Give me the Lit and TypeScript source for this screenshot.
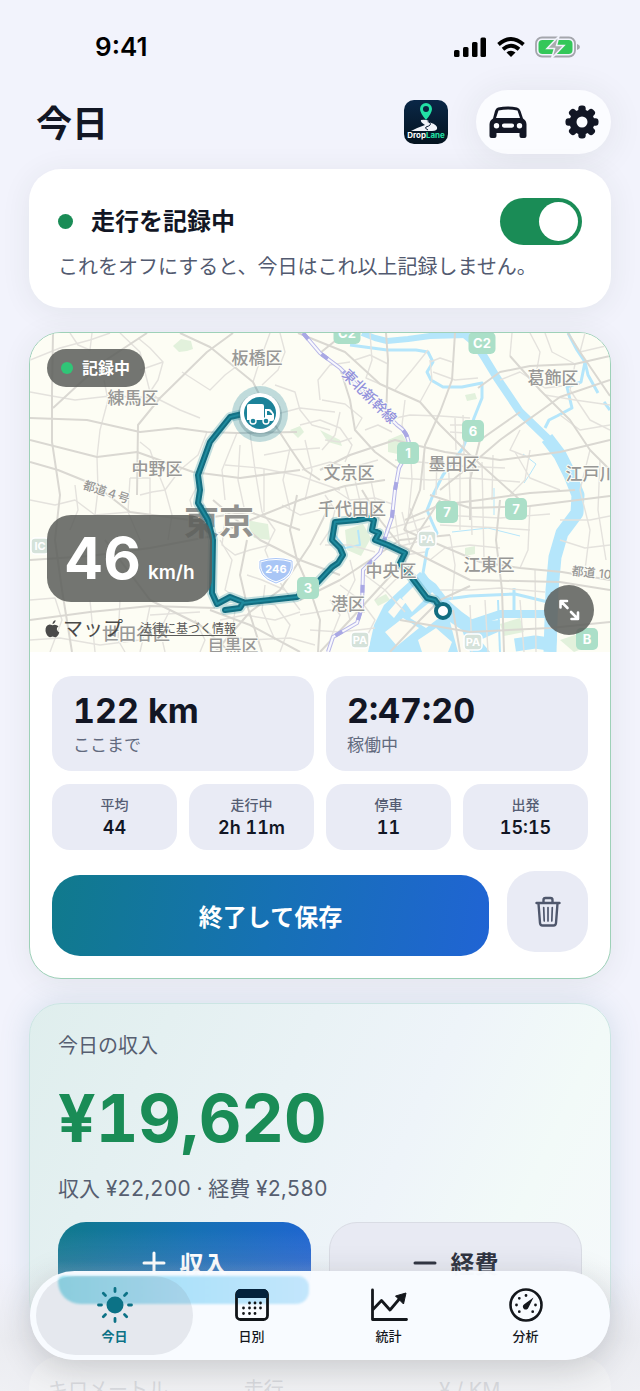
import { LitElement, html, css, svg } from "lit";
import { customElement, property, state } from "lit/decorators.js";

const FONT = css`"Inter", "Noto Sans CJK JP", sans-serif`;

/* ---------- map data ---------- */

const MAJOR_ROADS = [
  "M53 333L52 392L52 442L60 495L55 540L62 590L72 652",
  "M30 440L97 457L137 452L193 472L240 478L300 470",
  "M30 418L87 420L140 432L177 428L207 432L237 433L297 432",
  "M53 408L103 362L147 333",
  "M30 462L58 470L95 485L130 512L190 520L250 512L300 530",
  "M137 495L138 425L160 398L207 352L233 333",
  "M180 333L210 347L253 382L262 400L275 425L290 448L305 470L320 480",
  "M30 560L90 556L150 548L213 536L260 516L300 500L345 486L385 480",
  "M298 333L345 352L380 384L420 402L440 425L470 455L520 500",
  "M320 353L345 333",
  "M386 333L388 360L386 420",
  "M455 333L452 380L440 412L425 445L420 490L404 530",
  "M320 470L350 455L395 440L415 445L445 452L500 460L560 452L610 440",
  "M340 368L350 400L355 430L375 452L400 470",
  "M510 356L540 390L570 420L590 450L610 470",
  "M478 388L500 372L530 366L575 364L610 356",
  "M610 380L560 397L500 440L465 470L440 490",
  "M430 495L470 508L530 506L610 496",
  "M405 520L440 505L480 500L530 493L575 490",
  "M404 530L440 545L480 562L520 568L562 572L610 580",
  "M362 490L380 520L400 545L430 560L470 580L560 582L610 590",
  "M320 652L350 620L382 585L405 560L420 530L440 500",
  "M300 600L340 580L370 560L400 540L450 535",
  "M390 652L420 620L440 600L470 586",
  "M400 620L470 632L550 628L610 622",
  "M500 500L496 540L502 590L504 652",
  "M210 610L250 625L300 652",
  "M247 540L240 575L247 605L262 652",
  "M297 495L290 530L297 560L310 590L320 620L318 652",
  "M213 500L260 540L300 560L340 575",
  "M105 540L150 600L200 625L230 652",
  "M215 652L250 612L280 590L310 545L330 505",
  "M568 333L580 352L610 396",
  "M520 412L480 440L470 480L470 520",
  "M453 610L460 652",
  "M30 620L90 612L150 606L215 608",
];

const MINOR_ROADS = [
  "M30 360L60 348L90 340L110 333", "M70 333L78 345L90 350L92 333", "M30 392L52 396L75 400L110 396L160 398",
  "M97 457L100 430L108 400L104 380", "M97 457L98 490L95 515", "M140 370L163 362L158 380L150 392L160 400L180 410L200 418",
  "M163 362L150 348L138 338", "M182 372L210 390L225 375L245 360", "M120 333L140 352L150 392",
  "M140 442L150 450L157 470L165 490L152 492L140 495", "M207 432L198 455L180 470L165 490",
  "M237 433L230 450L222 470L225 500", "M225 465L260 468L300 476L340 490", "M240 445L238 480L245 512",
  "M250 433L255 470L262 512", "M264 455L290 450L320 448", "M273 415L300 408L335 412", "M275 385L295 392L300 410L312 425L330 430",
  "M253 382L260 360L270 333", "M280 333L285 352L278 370L262 385", "M290 448L283 480L290 510", "M305 440L312 470L305 500",
  "M264 468L264 512", "M300 425L320 420L340 428L352 445L345 462", "M322 400L345 404L362 418L355 430",
  "M355 360L370 355L388 364", "M370 333L372 360L366 378L380 384", "M395 390L412 370L428 350", "M405 400L402 425L408 440",
  "M386 420L410 415L440 416L470 418", "M420 402L432 380L430 360", "M433 372L455 380L478 378", "M430 362L440 358L452 362",
  "M450 425L478 425", "M450 432L482 434", "M455 418L456 450", "M463 415L464 455", "M395 460L430 463L460 466L505 468",
  "M400 478L430 480L470 478L520 482", "M410 440L412 480L408 520", "M424 455L424 490", "M437 455L436 495", "M448 455L450 500",
  "M460 470L460 530", "M470 465L472 535", "M482 462L484 560", "M493 455L492 500", "M440 515L500 518L550 514",
  "M440 525L500 528L530 530", "M530 505L528 550L520 568", "M515 452L530 478L560 490", "M530 450L525 480L510 495",
  "M535 380L540 352L530 333", "M510 356L512 333", "M545 333L552 352L575 364", "M585 333L580 352L610 345",
  "M500 380L520 372L545 388L580 384", "M545 395L575 400L610 405", "M560 415L580 430L610 425", "M575 364L570 390L590 420L610 430",
  "M520 430L510 450L530 458", "M590 450L580 490L590 530L585 570", "M600 460L598 510L606 560", "M560 520L590 520L610 516",
  "M560 540L585 548L610 545", "M450 535L455 565L452 600", "M430 560L445 548L470 545L500 548",
  "M440 590L470 590L500 588L545 592", "M470 605L472 652", "M485 600L488 652", "M520 600L524 652", "M535 570L536 652",
  "M325 495L335 510L330 530L320 545", "M335 490L350 500L375 498L395 505", "M345 486L352 510", "M355 480L362 510L370 520",
  "M370 476L376 505", "M325 545L350 545L375 552", "M350 560L355 580L345 600L350 620", "M365 575L385 590L405 612",
  "M340 585L360 600L375 620L365 640", "M330 600L340 615L330 640", "M300 615L330 610L365 612", "M310 630L340 632L375 628",
  "M375 600L395 580L415 565", "M380 545L400 555L412 570", "M395 515L400 550", "M402 512L410 545", "M410 508L420 540",
  "M385 530L425 518", "M388 538L430 526", "M393 548L432 538", "M398 556L425 552", "M220 540L232 560L225 590L240 600",
  "M226 512L222 545L235 555L250 550L270 545", "M262 512L275 530L265 550L275 575L285 590", "M282 505L300 515L320 510",
  "M247 575L262 580L285 590L300 610", "M255 600L275 605L290 625L280 652", "M265 585L262 610L275 640", "M220 620L245 615L275 620L300 612",
  "M225 635L250 640L290 638L315 645", "M235 610L232 635L240 652", "M195 620L205 640L200 652", "M170 610L160 630L165 652",
  "M150 606L145 630L140 652", "M150 615L200 612", "M120 600L118 640L125 652", "M90 600L95 652", "M30 600L55 598L62 620L50 652",
  "M30 640L60 638L100 645L140 640", "M30 500L55 505L75 500L95 515L130 512", "M75 485L78 510L70 530", "M130 478L128 512L140 540",
  "M130 478L150 478L150 520", "M165 490L172 515L168 540", "M195 520L190 500L200 480", "M320 400L318 380L330 365L350 362",
  "M340 412L335 435L322 450", "M302 470L330 462L350 468L378 460", "M325 440L340 442L352 438", "M365 430L378 425L392 432",
];

const RIVERS: Array<[string, number]> = [
  ["M362 333L375 338L387 341L408 339L430 336L467 335", 6],
  ["M462 332L474 342L483 355L497 378L520 412L547 438L560 452", 8],
  ["M547 438L560 455L570 475L578 495L577 513L562 533L555 557L552 590L550 652", 13],
  ["M350 345L387 350L416 350L428 352L433 362L427 372L431 380L443 387L462 387L482 383L482 398L474 418L470 430L463 448L443 475L433 495", 3],
  ["M433 495L427 510L432 522L437 533L427 550L423 573L433 587", 3],
  ["M568 333L577 350L585 362L581 382L567 387L572 408L557 416L549 420L545 428", 3],
  ["M585 362L588 375L598 393", 3],
  ["M604 402L610 410", 3],
  ["M523 454L536 464L530 474L524 483", 1],
  ["M494 488L494 515", 1],
  ["M452 532L488 528L520 536", 1],
  ["M440 600L470 596L515 594L548 602", 3],
  ["M470 624L500 614L545 614", 8],
  ["M514 588L514 610", 3],
  ["M515 645L535 642L556 645", 13],
  ["M498 600L500 652", 2],
  ["M335 535L345 548L360 545L358 530", 2],
];

const GREENS = [
  "M173 346l8-7 10 2 2 8-6 2-8 1z", "M388 440l14-6 6 10-10 10-10-2z", "M246 520l22 4 2 16-16-2z",
  "M345 530l18-6 8 14-10 18-14-6z", "M320 430l20 10 2 6-14-4z", "M465 395l10-2 2 6-10 2z", "M290 430l10-4 4 6-6 6z",
  "M500 624l20-6 4 14-20 4z", "M560 640l30-10 4 14-20 8z", "M374 600l12-6 4 6-12 6z", "M465 548l10-2v8l-10 2z",
];

const ROUTE =
  "M258 413L247 413L230 417L210 442L198 475L200 490L198 503L208 520L213 540L212 593L217 604L230 597L243 602L240 608L225 610L240 608L243 603L297 597L318 582L332 567L338 563L343 555L340 548L332 540L335 522L357 520L368 518L374 520L372 530L379 533L375 540L388 545L405 553L400 563L412 578L427 598L435 600L442 610";

const RAIL =
  "M303 333L320 353L340 368L397 425Q410 433 409 450L399 468L395 490L392 517L380 553L363 570L362 607L357 623L333 637L328 652";

const PLACES: Array<[string, number, number]> = [
  ["板橋区", 257, 364], ["葛飾区", 553, 384], ["練馬区", 133, 404], ["中野区", 157, 475], ["文京区", 349, 479],
  ["墨田区", 454, 470], ["江戸川", 591, 480], ["千代田区", 352, 515], ["中央区", 391, 577], ["江東区", 489, 571],
  ["港区", 348, 610], ["世田谷区", 136, 640], ["目黒区", 233, 652],
];

const SHIELDS: Array<[string, number, number]> = [
  ["C2", 347, 333], ["C2", 482, 343], ["6", 473, 431], ["1", 408, 453], ["7", 447, 512], ["7", 516, 509], ["3", 308, 588], ["B", 587, 639],
];

const PARKING: Array<[string, number, number]> = [["PA", 427, 539], ["PA", 360, 640], ["PA", 473, 642], ["IC", 40, 546]];

@customElement("city-map")
export class CityMap extends LitElement {
  static styles = css`
    :host { display: block; height: 319px; background: #fdfdf4; }
    svg { display: block; width: 100%; height: 100%; font-family: ${FONT}; }
    .major { fill: none; stroke: #dad8d2; stroke-width: 2; stroke-linejoin: round; }
    .minor { fill: none; stroke: #e4e2dd; stroke-width: 1.4; stroke-linejoin: round; }
    .water { fill: #b5e6fb; }
    .river { fill: none; stroke: #b5e6fb; stroke-linejoin: round; }
    .land { fill: #fdfbf1; }
    .green { fill: #e2f1dc; }
    .rail { fill: none; stroke: #b9b8e8; stroke-width: 4; }
    .rail-gap { fill: none; stroke: #f8f8fd; stroke-width: 2; }
    .rail-dash { fill: none; stroke: #a9a8e4; stroke-width: 4; stroke-dasharray: 8 20; }
    .place { font-size: 17px; font-weight: 500; fill: #989896; stroke: #fdfdf6; stroke-width: 2; paint-order: stroke; text-anchor: middle; }
    .city { font-size: 35px; font-weight: 700; fill: #92928f; }
    .road-name { font-size: 12px; }
    .rail-name { font-size: 14px; fill: #9493dc; }
    .shield { fill: #abdfc8; }
    .parking { fill: #d5e2da; stroke: #ffffff; stroke-width: 1.5; }
    .sign { font-size: 13px; font-weight: 700; fill: #fff; text-anchor: middle; }
    .sign-sm { font-size: 11px; }
    .halo { fill: none; stroke: #2a90a5; stroke-opacity: .28; stroke-width: 10; stroke-linejoin: round; stroke-linecap: round; }
    .route { fill: none; stroke: #126d80; stroke-width: 6; stroke-linejoin: round; stroke-linecap: round; }
    .core { fill: none; stroke: #1f8a9d; stroke-width: 2; stroke-linejoin: round; }
  `;

  render() {
    return html`
      <svg viewBox="30 333 580 319" preserveAspectRatio="xMidYMid slice" role="img" aria-label="地図">
        ${GREENS.map((d) => svg`<path class="green" d=${d} />`)}
        <path class="water" d="M368 652L374 625L384 605L400 590L420 572L436 584L448 600L462 612L476 622L500 620L498 632L480 640L490 652Z" />
        <path class="land" d="M388 612l12-14 6 4-12 16zM402 598l16-16 12 12-18 18zM385 632l18-14 16 10-22 18zM410 618l20-16 14 12-18 14zM418 640l18-12 16 14-4 10h-26zM432 592l8 8-6 4-6-6zM450 622l12 8 8 22h-12z" />
        ${RIVERS.map(([d, w]) => svg`<path class="river" stroke-width=${w} d=${d} />`)}
        ${MINOR_ROADS.map((d) => svg`<path class="minor" d=${d} />`)}
        ${MAJOR_ROADS.map((d) => svg`<path class="major" d=${d} />`)}
        ${["rail", "rail-gap", "rail-dash"].map((c) => svg`<path class=${c} d=${RAIL} />`)}
        <text class="place road-name" transform="translate(105 496) rotate(18)">都道４号</text>
        <text class="place road-name" transform="translate(591 577) rotate(6)">都道 10</text>
        <text class="place rail-name" transform="translate(366 400) rotate(45)">東北新幹線</text>
        <path d="M260 561q16-5 32 0q3 16-16 22q-19-6-16-22z" fill="#a9c6f6" stroke="#fff" stroke-width="3" />
        <path d="M260 561q16-5 32 0q3 16-16 22q-19-6-16-22z" fill="none" stroke="#a9c6f6" />
        <text class="sign sign-sm" x="276" y="573">246</text>
        ${PARKING.map(
          ([t, x, y]) => svg`<rect class="parking" x=${x - 9} y=${y - 8} width="18" height="16" rx="4" />
            <text class="sign sign-sm" x=${x} y=${y + 4}>${t}</text>`
        )}
        <text class="place city" x="219" y="535">東京</text>
        <path class="halo" d=${ROUTE} />
        <path class="route" d=${ROUTE} />
        <path class="core" d=${ROUTE} />
        ${SHIELDS.map(([t, x, y]) => {
          const w = t.length > 1 ? 27 : 22;
          return svg`<rect class="shield" x=${x - w / 2} y=${y - 11} width=${w} height="22" rx="5" />
            <text class="sign" x=${x} y=${y + 5}>${t}</text>`;
        })}
        ${PLACES.map(([t, x, y]) => svg`<text class="place" x=${x} y=${y}>${t}</text>`)}
        <circle cx="443" cy="611" r="7" fill="#fff" stroke="#126d80" stroke-width="4" />
        <circle cx="260" cy="414" r="28" fill="#1d8397" fill-opacity=".27" />
        <circle cx="260" cy="415" r="22" fill="#30606c" fill-opacity=".25" />
        <circle cx="260" cy="413" r="20" fill="#fff" />
        <circle cx="260" cy="413" r="16" fill="#1b8299" />
        <path fill="#fff" d="M249 404h13q2 0 2 2v14h-17v-14q0-2 2-2zM265 409h4q2 0 3 2l2 3v5q0 2-2 2h-7z" />
        <path fill="#1b8299" d="M267 411h2l3 3v1h-5z" />
        <circle cx="253" cy="421" r="3" fill="#1b8299" stroke="#fff" stroke-width="1.4" />
        <circle cx="266" cy="421" r="3" fill="#1b8299" stroke="#fff" stroke-width="1.4" />
      </svg>
    `;
  }
}

/* ---------- tab bar ---------- */

const TABS = [
  {
    id: "today", label: "今日",
    icon: svg`<circle cx="20" cy="20" r="8.500" fill="currentColor" />
      <path stroke="currentColor" stroke-width="2.800" stroke-linecap="round" d="M20 3.500v3M20 33.500v3M3.500 20h3M33.500 20h3M8.300 8.300l2.200 2.200M29.500 29.500l2.200 2.200M8.300 31.700l2.200-2.200M29.500 10.500l2.200-2.200" />`,
  },
  {
    id: "daily", label: "日別",
    icon: svg`<rect x="4.500" y="5.500" width="31" height="29" rx="4" fill="none" stroke="#101418" stroke-width="2.800" />
      <path fill="#04223c" d="M4 13V9q0-5 5-5h22q5 0 5 5v4z" />
      <path stroke="#101418" stroke-width="2.800" stroke-linecap="round" d="M17.500 18h0M23 18h0M28.500 18h0M11.500 23h0M17.500 23h0M23 23h0M28.500 23h0M11.500 28.500h0M17.500 28.500h0M23 28.500h0" />`,
  },
  {
    id: "stats", label: "統計",
    icon: svg`<path fill="none" stroke="currentColor" stroke-width="2.800" stroke-linecap="round" stroke-linejoin="round" d="M3.500 5v29.500h34M4 24.500l8.500-9 8.500 9.500 11-13" />
      <path fill="currentColor" stroke="currentColor" stroke-linejoin="round" d="M26.500 11l10.500-3-2.500 11z" />`,
  },
  {
    id: "analysis", label: "分析",
    icon: svg`<circle cx="20" cy="20" r="15.500" fill="none" stroke="currentColor" stroke-width="2.600" />
      <path stroke="currentColor" stroke-width="2.800" stroke-linecap="round" d="M20 10.500h0M13.300 13.300h0M10.500 20h0M13.300 26.700h0M26.700 26.700h0M29.500 20h0" />
      <path fill="currentColor" d="M27.500 12.500L22.500 22.500a2.900 2.900 0 1 1-4.300-3.300z" />`,
  },
];

@customElement("tab-bar")
export class TabBar extends LitElement {
  @property() active = "today";

  static styles = css`
    :host { display: block; font-family: ${FONT}; }
    nav {
      position: relative; display: grid; grid-template-columns: repeat(4, 1fr); height: 89px; padding: 0 16px;
      box-sizing: border-box; border-radius: 45px; overflow: hidden; background: #f8fbfffa;
    }
    .tint {
      position: absolute; left: 28px; top: 5px; right: 50%; height: 28px; margin-right: 11px;
      border-radius: 6px 12px 14px 24px; filter: blur(1px);
      background: linear-gradient(90deg, #8edbec, #aee2fa 50%, #c3e6fc);
    }
    button {
      position: relative; display: flex; flex-direction: column; align-items: center; gap: 1px; padding: 14px 0 0;
      border: 0; background: none; color: #14171c; font: 500 13px/20px ${FONT}; cursor: pointer;
    }
    button svg { width: 40px; height: 40px; position: relative; }
    button span { position: relative; }
    .active { color: #0c7286; font-weight: 700; }
    .active::before {
      content: ""; position: absolute; inset: 5px -10px; border-radius: 40px;
      background: rgba(120, 130, 140, .15);
    }
  `;

  render() {
    return html`
      <nav aria-label="メイン">
        <div class="tint"></div>
        ${TABS.map(
          (t) => html`<button class=${t.id === this.active ? "active" : ""} @click=${() => (this.active = t.id)}>
            <svg viewBox="0 0 40 40" aria-hidden="true">${t.icon}</svg><span>${t.label}</span>
          </button>`
        )}
      </nav>
    `;
  }
}

/* ---------- page ---------- */

@customElement("app-root")
export class AppRoot extends LitElement {
  @state() private recording = true;

  static styles = css`
    :host {
      display: block; position: relative; height: 100vh; overflow: hidden;
      background: #f2f3fc; color: #121624; font-family: ${FONT};
    }
    * { box-sizing: border-box; }
    button { font-family: inherit; cursor: pointer; border: 0; padding: 0; }
    h1, h2, p, dl, dt, dd { margin: 0; }

    .status { display: flex; align-items: center; justify-content: space-between; height: 90px; padding: 4px 59px 0 95px; }
    .time { font-size: 26px; line-height: 30px; font-weight: 600; color: #000; }
    .status svg { width: 128px; height: 24px; }

    header { display: flex; align-items: center; height: 64px; margin: 0 29px 15px 36px; }
    h1 { flex: 1; padding-top: 3px; font-size: 36px; line-height: 48px; font-weight: 700; }
    .logo { width: 44px; height: 44px; margin-right: 28px; }
    .logo text { font-size: 8px; font-weight: 700; text-anchor: middle; }
    .actions {
      display: flex; align-items: center; gap: 34px; height: 64px; padding: 0 9px 0 12px; border-radius: 32px;
      background: #fbfcff; box-shadow: 0 4px 36px rgba(40, 50, 40, .09);
    }
    .actions button { width: 40px; height: 40px; background: none; color: #121624; }
    .actions svg { display: block; width: 40px; height: 40px; }

    .stack { display: flex; flex-direction: column; gap: 24px; padding: 0 29px; }
    .card { flex: none; border-radius: 32px; background: #fff; box-shadow: 0 4px 30px rgba(50, 60, 50, .08); }

    .switch-card { padding: 29px 29px 26px; }
    .switch-row { display: flex; align-items: center; height: 47px; }
    .dot { width: 15px; height: 15px; margin-right: 18px; border-radius: 50%; background: #1a8c56; }
    .switch-row label { flex: 1; font-size: 24px; line-height: 36px; font-weight: 700; }
    .toggle {
      appearance: none; display: flex; align-items: center; width: 82px; height: 47px; margin: 0; padding: 4px;
      border-radius: 24px; background: #c9ccd6; cursor: pointer;
    }
    .toggle::before { content: ""; width: 39px; height: 39px; border-radius: 50%; background: #fff; }
    .toggle:checked { justify-content: flex-end; background: #1a8c56; }
    .hint { margin-top: 7px; font-size: 20px; line-height: 30px; color: #525a70; white-space: nowrap; }

    .trip { border: 1px solid #9ed1b8; overflow: hidden; }
    .map-wrap { position: relative; }
    .overlay { position: absolute; background: rgba(92, 94, 91, .86); color: #fff; }
    .live { left: 17px; top: 16px; display: flex; align-items: center; gap: 9px; height: 38px; padding: 0 15px 0 14px; border-radius: 19px; font-size: 16px; line-height: 24px; font-weight: 700; }
    .live i { width: 12px; height: 12px; border-radius: 50%; background: #30c577; }
    .speed { left: 17px; bottom: 50px; display: flex; align-items: baseline; gap: 7px; height: 87px; padding: 0 17px; border-radius: 24px; line-height: 87px; font-size: 58px; font-weight: 700; }
    .speed small { font-size: 19px; font-weight: 600; }
    .expand { right: 16px; bottom: 17px; width: 50px; height: 50px; border-radius: 50%; }
    .expand svg { display: block; width: 50px; height: 50px; }
    .credit { position: absolute; left: 14px; bottom: 7px; display: flex; align-items: center; gap: 17px; color: #4a4a49; font-size: 20px; line-height: 32px; }
    .brand { display: flex; align-items: center; gap: 2px; }
    .credit svg { width: 17px; height: 20px; }
    .credit a { font-size: 12px; line-height: 20px; color: #5a5a58; text-underline-offset: 2px; }

    .trip-body { padding: 24px 22px 22px; }
    .tiles { display: grid; grid-template-columns: 1fr 1fr; gap: 12px; font-variant-numeric: tabular-nums; }
    .tile { display: flex; flex-direction: column-reverse; justify-content: flex-end; height: 95px; padding: 14px 21px 0; border-radius: 20px; background: #e9ebf5; }
    .tile dd { font-size: 34px; line-height: 42px; font-weight: 700; white-space: nowrap; }
    .tile dt { font-size: 17px; line-height: 26px; color: #626a7e; }
    .minis { display: grid; grid-template-columns: repeat(4, 1fr); gap: 12px; margin-top: 13px; font-variant-numeric: tabular-nums; }
    .mini { height: 66px; padding-top: 10px; border-radius: 18px; background: #e9ebf5; text-align: center; }
    .mini dt { font-size: 14px; line-height: 22px; font-weight: 500; color: #555d73; }
    .mini dd { font-size: 18px; line-height: 24px; font-weight: 600; }
    .trip-actions { display: flex; align-items: flex-end; gap: 18px; margin-top: 21px; }
    .primary { background: linear-gradient(100deg, #107a8c, #1671b4 50%, #2064d4); color: #fff; font-size: 24px; font-weight: 700; border-radius: 28px; height: 81px; }
    .trip-actions .primary { flex: 1; }
    .trash { align-self: flex-start; width: 81px; height: 81px; margin-bottom: 4px; border-radius: 28px; background: #e9ebf5; color: #4f576c; }
    .trash svg { display: block; width: 40px; height: 40px; margin: 0 auto; }

    .income {
      padding: 27px 28px 28px; border: 1px solid #cbe5e3;
      background: linear-gradient(115deg, #dfeeed, #eef4f9 60%, #f2faf8 80%, #f6f9fb);
      box-shadow: 0 0 30px rgba(80, 130, 150, .18);
    }
    .income h2 { font-size: 20px; line-height: 30px; font-weight: 400; color: #565e70; }
    .amount { margin-top: 18px; font-size: 66px; line-height: 78px; font-weight: 700; color: #1a8c56; font-variant-numeric: tabular-nums; }
    .detail { margin-top: 17px; font-size: 21px; line-height: 30px; color: #565e70; white-space: nowrap; font-variant-numeric: tabular-nums; }
    .pair { display: grid; grid-template-columns: 1fr 1fr; gap: 18px; margin-top: 18px; }
    .pair button { display: flex; align-items: center; justify-content: center; gap: 14px; }
    .pair svg { width: 24px; height: 24px; }
    .pair .primary { background: linear-gradient(180deg, transparent 10%, rgba(140, 160, 210, .4) 80%), linear-gradient(105deg, #107a8c, #1671b4 50%, #2064d4); }
    .secondary { height: 81px; border: 1px solid #d9dce4; border-radius: 28px; background: #e8eaf3; color: #2f3340; font-size: 24px; font-weight: 700; }

    .totals { display: grid; grid-template-columns: 1fr 1fr 1fr; gap: 24px; padding: 19px 0 19px 19px; color: #8a8d96; font-size: 20px; line-height: 30px; }

    .fade { position: absolute; left: 0; right: 0; bottom: 0; height: 130px; background: linear-gradient(180deg, rgba(238, 239, 243, 0), rgba(232, 233, 236, .7) 60%, rgba(238, 239, 242, .8)); }
    tab-bar { position: absolute; left: 30px; right: 30px; bottom: 31px; border-radius: 45px; box-shadow: 0 8px 34px rgba(40, 44, 50, .2); }
  `;

  private stat(kind: string, label: string, value: string) {
    return html`<div class=${kind}><dt>${label}</dt><dd>${value}</dd></div>`;
  }

  render() {
    return html`
      <div class="status">
        <span class="time">9:41</span>
        <svg viewBox="0 0 128 24" aria-hidden="true">
          <rect x="1" y="15" width="5.500" height="7" rx="1.500" />
          <rect x="10" y="12" width="5.500" height="10" rx="1.500" />
          <rect x="19" y="7" width="5.500" height="15" rx="1.500" />
          <rect x="27.500" y="2.500" width="5.500" height="19.500" rx="1.500" />
          <path fill="none" stroke="#000" stroke-width="3.800" d="M45.500 9.500q12.500-11 25 0M50 14.200q8-7 16 0" />
          <path d="M53.500 17.500q4.500-3.500 9 0L58 22z" />
          <rect x="83" y="2.500" width="39" height="19" rx="6" fill="none" stroke="#a4a6ac" stroke-width="1.800" />
          <rect x="85.500" y="5" width="34" height="14" rx="4" fill="#34c759" />
          <path fill="#a4a6ac" d="M124 9q3 1 3 3t-3 3z" />
          <path fill="#a9acae" stroke="#f2f3fc" stroke-width="1.500" d="M106 1L94 13.500h7.500L98.500 23.500 111 10.500h-7.500z" />
        </svg>
      </div>

      <header>
        <h1>今日</h1>
        <svg class="logo" viewBox="0 0 44 44" role="img" aria-label="DropLane">
          <defs><linearGradient id="g" x1="0" y1="0" x2="0" y2="1"><stop offset="0" stop-color="#0a2747" /><stop offset="1" stop-color="#04131f" /></linearGradient></defs>
          <rect width="44" height="44" rx="10" fill="url(#g)" />
          <path fill="#f1f4fa" d="M17 20q4-1 8 1l-2 1q8 1 10 5 1 4-5 4H7q8-4 14-6-5-3-4-5z" />
          <path fill="none" stroke="#0a1c33" stroke-width="1" d="M25 22q4 3-3 5-2 1 2 3" />
          <path fill="#22e0a5" fill-rule="evenodd" d="M22 20q-6-7-6-11a6 6 0 0 1 12 0q0 4-6 11zM22 12a3 3 0 1 0 0-6 3 3 0 0 0 0 6z" />
          <text x="22" y="38" fill="#fff">Drop<tspan fill="#22e0a5">Lane</tspan></text>
        </svg>
        <div class="actions">
          <button aria-label="車両">
            <svg viewBox="0 0 40 40">
              <path fill="currentColor" fill-rule="evenodd" d="M10 5.500Q20 3.500 29 5.500q2.500.5 3.500 3.500l2.500 7.500q3.500 2 3.500 6V34q0 2-2 2h-3q-2 0-2-2v-3H8.500v3q0 2-2 2h-3q-2 0-2-2V22.500q0-4 3.500-6L7 9q.8-3 3-3.500zM10.500 8.500L8 16h24l-2.500-7.500Q20 6.500 10.500 8.500zM8.500 21a2.700 2.700 0 1 0 0 5.400 2.700 2.700 0 0 0 0-5.400zM31.500 21a2.700 2.700 0 1 0 0 5.400 2.700 2.700 0 0 0 0-5.400zM16 21.500a2 2 0 0 0 0 4.200h8a2 2 0 0 0 0-4.200z" />
            </svg>
          </button>
          <button aria-label="設定">
            <svg viewBox="0 0 40 40">
              ${[0, 45, 90, 135].map((a) => svg`<rect x="16.300" y="3.500" width="7.400" height="33" rx="3" fill="currentColor" transform="rotate(${a} 20 20)" />`)}
              <circle cx="20" cy="20" r="12.500" fill="currentColor" />
              <circle cx="20" cy="20" r="5.500" fill="#fbfcff" />
            </svg>
          </button>
        </div>
      </header>

      <main class="stack">
        <section class="card switch-card">
          <div class="switch-row">
            <span class="dot"></span>
            <label for="rec">走行を記録中</label>
            <input id="rec" class="toggle" type="checkbox" role="switch" .checked=${this.recording}
              @change=${(e: Event) => (this.recording = (e.target as HTMLInputElement).checked)} />
          </div>
          <p class="hint">これをオフにすると、今日はこれ以上記録しません。</p>
        </section>

        <section class="card trip">
          <div class="map-wrap">
            <city-map></city-map>
            <div class="overlay live"><i></i>記録中</div>
            <div class="overlay speed">46<small>km/h</small></div>
            <div class="credit">
              <span class="brand">
                <svg viewBox="0 0 17 20" aria-hidden="true"><path fill="currentColor" d="M11.500 1q.2 3-3 4.300Q8.300 2.500 11.500 1zM8.500 6.300q3-1.600 6 .9-3.800 3 .8 6.300-1.500 4.300-3.800 4.800-1.300-.1-2.900-.8-1.700.7-2.700.8Q2.500 17.500 1.500 12q-.3-5.500 4-6.400 1.500.1 3 .7z" /></svg>マップ
              </span>
              <a href="#legal">法律に基づく情報</a>
            </div>
            <button class="overlay expand" aria-label="拡大">
              <svg viewBox="0 0 50 50"><path fill="none" stroke="#fff" stroke-width="2.600" stroke-linecap="round" stroke-linejoin="round" d="M16.500 22.500v-6.500h6.500M17 16.500l6.500 6.500M34 27.500V34h-6.500M33.500 33.500L27 27" /></svg>
            </button>
          </div>
          <div class="trip-body">
            <dl class="tiles">${this.stat("tile", "ここまで", "122 km")}${this.stat("tile", "稼働中", "2:47:20")}</dl>
            <dl class="minis">
              ${this.stat("mini", "平均", "44")}${this.stat("mini", "走行中", "2h 11m")}${this.stat("mini", "停車", "11")}${this.stat("mini", "出発", "15:15")}
            </dl>
            <div class="trip-actions">
              <button class="primary">終了して保存</button>
              <button class="trash" aria-label="削除">
                <svg viewBox="0 0 40 40"><path fill="none" stroke="currentColor" stroke-width="2.400" stroke-linecap="round" stroke-linejoin="round" d="M8.500 11h23M15.500 10.500V8q0-2 2-2h5q2 0 2 2v2.500M10.500 11.500L12 31q.2 2.500 2.500 2.500h11q2.300 0 2.500-2.500l1.500-19.500" /><path fill="none" stroke="currentColor" stroke-width="1.700" stroke-linecap="round" d="M15.700 15.500l.5 13.500M20 15.500V29M24.300 15.500l-.5 13.500" /></svg>
              </button>
            </div>
          </div>
        </section>

        <section class="card income">
          <h2>今日の収入</h2>
          <p class="amount">¥19,620</p>
          <p class="detail">収入 ¥22,200 · 経費 ¥2,580</p>
          <div class="pair">
            <button class="primary">
              <svg viewBox="0 0 24 24" aria-hidden="true"><path stroke="#fff" stroke-width="3" stroke-linecap="round" d="M12 2v20M2 12h20" /></svg>収入
            </button>
            <button class="secondary">
              <svg viewBox="0 0 24 24" aria-hidden="true"><path stroke="currentColor" stroke-width="3" stroke-linecap="round" d="M2 12h20" /></svg>経費
            </button>
          </div>
        </section>

        <section class="card totals"><span>キロメートル</span><span>走行</span><span>¥ / KM</span></section>
      </main>

      <div class="fade"></div>
      <tab-bar></tab-bar>
    `;
  }
}
